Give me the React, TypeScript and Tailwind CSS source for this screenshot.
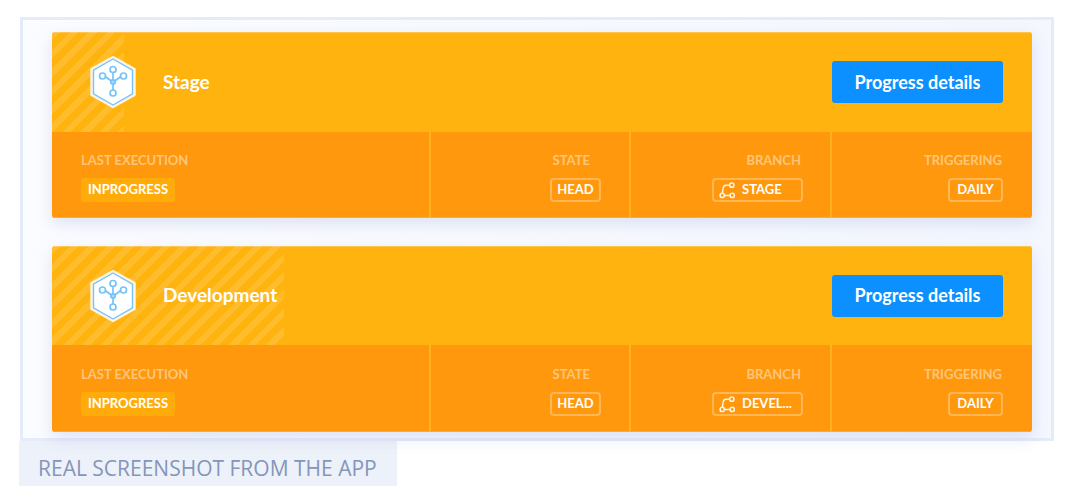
const HexIcon = () => (
  <svg width="50" height="56" viewBox="0 0 50 56" className="shrink-0">
    <path d="M25 3 L46.5 15 V41 L25 53 L3.5 41 V15 Z" fill="#ffffff" stroke="#fff3dc" strokeWidth="2.5" strokeLinejoin="round" />
    <path d="M25 5 L44.5 16.2 V39.8 L25 51 L5.5 39.8 V16.2 Z" fill="#ffffff" stroke="#74c4fa" strokeWidth="1.4" strokeLinejoin="round" />
    <g fill="none" stroke="#74c4fa" strokeWidth="1.7">
      <circle cx="25" cy="15.5" r="3" />
      <circle cx="14.5" cy="22" r="3" />
      <circle cx="35.5" cy="22" r="3" />
      <circle cx="25" cy="28" r="2.2" fill="#a9dbfb" />
      <circle cx="25" cy="39" r="3" />
      <path d="M25 18.5 V25.8 M17.5 22.8 L23 26.8 M32.5 22.8 L27 26.8 M25 30.2 V36" />
    </g>
  </svg>
);

const BranchIcon = () => (
  <svg width="17" height="17" viewBox="0 0 17 17" fill="none" stroke="#ffffff" strokeWidth="1.5" className="shrink-0 opacity-90">
    <circle cx="12.8" cy="3.2" r="2.1" />
    <circle cx="3.2" cy="13.4" r="2.1" />
    <circle cx="13.2" cy="13.4" r="2.1" />
    <path d="M10.7 3.2 H7 C5 3.2 4.2 5 4 7 L3.4 11.3 M5.3 13.4 H11.1" />
  </svg>
);

const Outlined = ({ children, width }: { children: React.ReactNode; width: string }) => (
  <div className={`flex h-6 items-center rounded-[4px] border-2 border-white/30 text-[13px] font-bold text-white ${width}`}>
    {children}
  </div>
);

const Cell = ({ label, children, className, labelPad }: { label: string; children: React.ReactNode; className: string; labelPad: string }) => (
  <div className={`flex flex-col items-end border-l-2 border-[#ffb21a] ${className}`}>
    <div className={`text-[13px] font-bold leading-4 text-white/45 ${labelPad}`}>{label}</div>
    <div className="mt-[10px]">{children}</div>
  </div>
);

const Card = ({ name, branch, stripe, short }: { name: string; branch: string; stripe: string; short?: boolean }) => {
  const top = short ? "pt-[21px]" : "pt-[20px]";
  return (
    <div className="h-[186px] w-[980px] overflow-hidden rounded-[3px] shadow-[0_6px_16px_rgba(120,140,200,0.22)]">
      <div className={`relative flex items-center justify-between bg-[#ffb30f] pr-[29px] shadow-[inset_0_1px_0_#ffc44f] ${short ? "h-[99px]" : "h-[100px]"}`}>
        <div
          className={`absolute inset-y-0 left-0 bg-[repeating-linear-gradient(135deg,rgba(255,255,255,0.12)_0px,rgba(255,255,255,0.12)_6px,transparent_6px,transparent_13px)] ${stripe}`}
        />
        <div className="relative flex items-center pl-[36px]">
          <HexIcon />
          <div className="ml-[25px] text-[19px] font-bold text-white">{name}</div>
        </div>
        <button className="relative h-[42px] w-[171px] rounded-[3px] bg-[#0c8fff] text-[18px] font-bold text-white">
          Progress details
        </button>
      </div>
      <div className={`flex bg-[#ff980d] shadow-[inset_0_-1px_0_#ffae20] ${short ? "h-[87px]" : "h-[86px]"}`}>
        <div className={`flex-1 pl-[29px] ${top}`}>
          <div className="text-[13px] font-bold leading-4 text-white/45">LAST EXECUTION</div>
          <div className="mt-[10px] flex h-6 w-[94px] items-center justify-center rounded-[3px] bg-[#ffac0a] text-[13px] font-bold text-white">
            INPROGRESS
          </div>
        </div>
        <Cell label="STATE" labelPad="pr-[11px]" className={`w-[200px] pr-[28px] ${top}`}>
          <Outlined width="w-[51px] justify-center">HEAD</Outlined>
        </Cell>
        <Cell label="BRANCH" labelPad="pr-[2px]" className={`w-[201px] pr-[27px] ${top}`}>
          <Outlined width="w-[91px] pl-[5px] gap-[6px]">
            <BranchIcon />
            {branch}
          </Outlined>
        </Cell>
        <Cell label="TRIGGERING" labelPad="pr-[1px]" className={`w-[202px] pr-[29px] ${top}`}>
          <Outlined width="w-[55px] justify-center">DAILY</Outlined>
        </Cell>
      </div>
    </div>
  );
};

export default function App() {
  return (
    <div className="h-[486px] w-[1076px] overflow-hidden bg-white font-['Lato',sans-serif]">
      <div className="ml-5 mt-[17px] flex h-[424px] w-[1034px] flex-col gap-7 border-[3px] border-[#e6ebf9] bg-gradient-to-r from-[#fbfcff] to-[#f4f7fe] pl-[29px] pt-3">
        <Card name="Stage" branch="STAGE" stripe="w-[72px]" />
        <Card name="Development" branch="DEVEL..." stripe="w-[232px]" short />
      </div>
      <div className="ml-[19px] flex h-[45px] w-[378px] items-center bg-[#edf1f9] pl-[19px] pt-[10px] font-['Open_Sans',sans-serif] text-[21px] text-[#8496b9]">
        REAL SCREENSHOT FROM THE APP
      </div>
    </div>
  );
}
